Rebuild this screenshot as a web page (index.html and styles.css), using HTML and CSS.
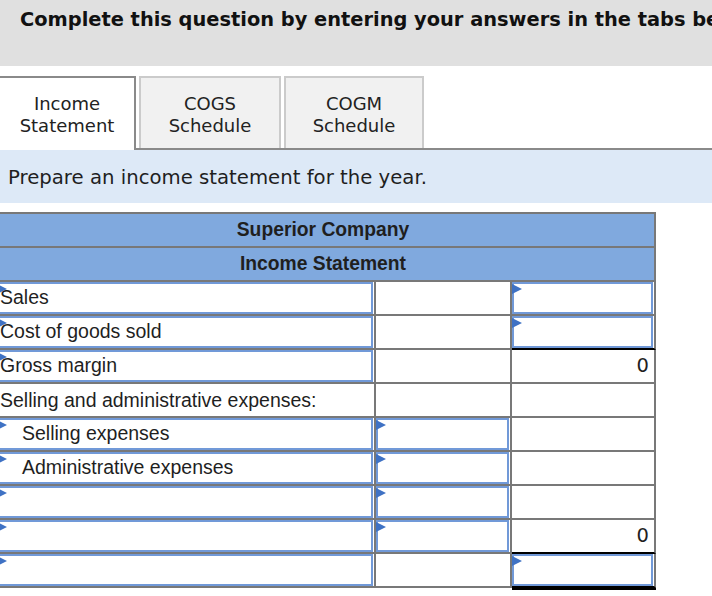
FILE: index.html
```html
<!DOCTYPE html>
<html lang="en">
<head>
<meta charset="utf-8">
<title>Income Statement</title>
<link rel="stylesheet" href="styles.css">
</head>
<body>
<div class="banner">Complete this question by entering your answers in the tabs below.</div>

<div class="tabs">
  <div class="tab tab-active">Income<br>Statement</div>
  <div class="tab tab-2">COGS<br>Schedule</div>
  <div class="tab tab-3">COGM<br>Schedule</div>
</div>

<div class="prompt">Prepare an income statement for the year.</div>

<div class="sheet">
  <div class="head">Superior Company</div>
  <div class="head">Income Statement</div>

  <div class="cell"><div class="inp"><span class="tri"></span>Sales</div></div>
  <div class="cell"></div>
  <div class="cell"><div class="inp"><span class="tri"></span></div></div>

  <div class="cell"><div class="inp"><span class="tri"></span>Cost of goods sold</div></div>
  <div class="cell"></div>
  <div class="cell line-black"><div class="inp"><span class="tri"></span></div></div>

  <div class="cell"><div class="inp"><span class="tri"></span>Gross margin</div></div>
  <div class="cell"></div>
  <div class="cell num">0</div>

  <div class="cell plain">Selling and administrative expenses:</div>
  <div class="cell"></div>
  <div class="cell"></div>

  <div class="cell"><div class="inp indent"><span class="tri"></span>Selling expenses</div></div>
  <div class="cell"><div class="inp"><span class="tri"></span></div></div>
  <div class="cell"></div>

  <div class="cell"><div class="inp indent"><span class="tri"></span>Administrative expenses</div></div>
  <div class="cell"><div class="inp"><span class="tri"></span></div></div>
  <div class="cell"></div>

  <div class="cell"><div class="inp"><span class="tri"></span></div></div>
  <div class="cell"><div class="inp"><span class="tri"></span></div></div>
  <div class="cell"></div>

  <div class="cell"><div class="inp"><span class="tri"></span></div></div>
  <div class="cell"><div class="inp"><span class="tri"></span></div></div>
  <div class="cell num line-black">0</div>

  <div class="cell"><div class="inp"><span class="tri"></span></div></div>
  <div class="cell"></div>
  <div class="cell line-double"><div class="inp"><span class="tri"></span></div></div>
</div>
</body>
</html>
```

FILE: styles.css
```css
* { box-sizing: border-box; }

html, body {
  margin: 0;
  padding: 0;
  background: #ffffff;
  overflow: hidden;
}

body {
  width: 712px;
  height: 596px;
  color: #1f1f1f;
  font-family: "DejaVu Sans", Verdana, sans-serif;
}

.banner {
  height: 66px;
  background: #e0e0e0;
  padding: 9px 0 0 20px;
  font-size: 19.4px;
  font-weight: bold;
  line-height: 22px;
  white-space: nowrap;
  overflow: hidden;
  color: #111;
}

.tabs {
  display: flex;
  align-items: flex-start;
  margin-top: 10px;
  border-bottom: 2px solid #8a8a8a;
  height: 74px;
}

.tab {
  height: 72px;
  padding-top: 15px;
  text-align: center;
  font-size: 18px;
  line-height: 22px;
  color: #222;
  background: #f1f1f1;
  border: 2px solid #cbcbcb;
  border-bottom: none;
}

.tab-active {
  width: 138px;
  height: 74px;
  margin-left: -2px;
  margin-bottom: -2px;
  background: #ffffff;
  border-color: #8a8a8a;
}

.tab-2 {
  width: 142px;
  margin-left: 3px;
}

.tab-3 {
  width: 140px;
  margin-left: 3px;
}

.prompt {
  height: 53px;
  background: #dde9f7;
  padding: 16px 0 0 8px;
  font-size: 19.7px;
  line-height: 23px;
  color: #1f1f1f;
  white-space: nowrap;
}

.sheet {
  margin-top: 9px;
  margin-left: -5px;
  width: 661px;
  display: grid;
  grid-template-columns: 379px 136px 144px;
  grid-auto-rows: 34px;
  border-top: 2px solid #787878;
  border-left: 2px solid #787878;
  font-family: "Liberation Sans", Arial, sans-serif;
  font-size: 19.5px;
  color: #1f1f1f;
}

.head {
  grid-column: 1 / -1;
  background: #80a9de;
  border-right: 2px solid #787878;
  border-bottom: 2px solid #787878;
  text-align: center;
  font-weight: bold;
  font-size: 19.3px;
  line-height: 32px;
  color: #1f1f1f;
  padding-right: 5px;
}

.cell {
  background: #ffffff;
  border-right: 2px solid #787878;
  border-bottom: 2px solid #787878;
  white-space: nowrap;
  line-height: 32px;
}

.plain {
  padding-left: 3px;
}

.num {
  text-align: right;
  padding-right: 5px;
  font-family: "DejaVu Sans", Verdana, sans-serif;
  font-size: 19.5px;
}

.line-black {
  border-bottom-color: #000000;
}

.line-double {
  border-bottom-color: #000000;
  box-shadow: 0 2px 0 #000000;
}

.inp {
  position: relative;
  height: 32px;
  margin-right: 1px;
  border: 2px solid #7199d8;
  padding-left: 1px;
  line-height: 27px;
  background: #ffffff;
}

.indent {
  padding-left: 23px;
}

.tri {
  position: absolute;
  left: -2px;
  top: 0;
  width: 0;
  height: 0;
  border-left: 10px solid #3f72c4;
  border-top: 5px solid transparent;
  border-bottom: 5px solid transparent;
}
```
